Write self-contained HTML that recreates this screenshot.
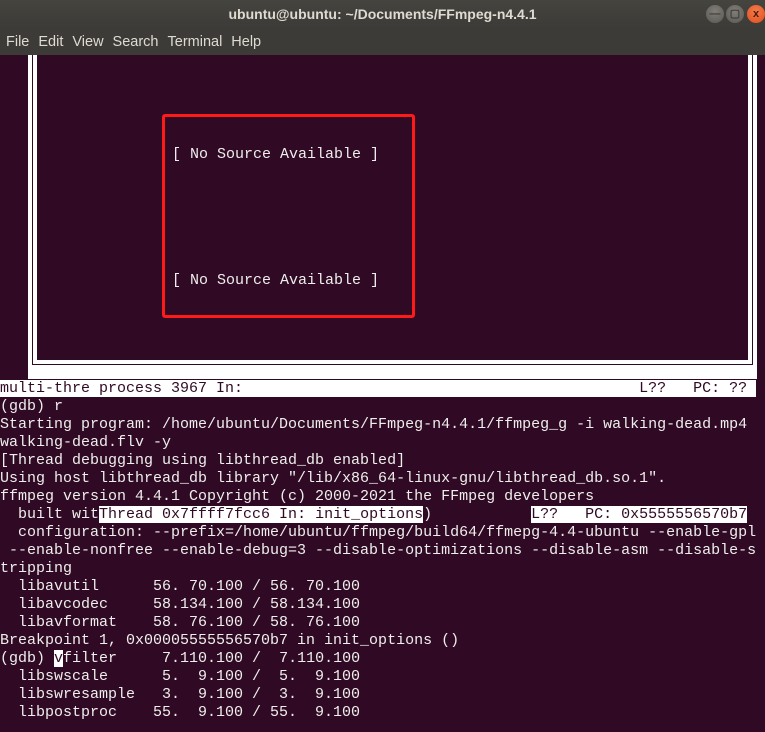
<!DOCTYPE html>
<html><head><meta charset="utf-8"><style>
*{margin:0;padding:0}
body{width:765px;height:732px;overflow:hidden;background:#300a24;position:relative;font-family:"Liberation Mono",monospace}
#title{position:absolute;left:0;top:0;width:765px;height:28px;background:linear-gradient(#45443f,#3c3b37);color:#dfdbd2;font:bold 14px "Liberation Sans",sans-serif;text-align:center;line-height:28px}
#menu{position:absolute;left:0;top:28px;width:765px;height:27px;background:#3c3b37;color:#dfdbd2;font:14.5px "Liberation Sans",sans-serif;line-height:28px}
#menu span{margin-left:6px;margin-right:3px}
.btn{position:absolute;top:5px;width:18px;height:18px;border-radius:50%;background:radial-gradient(circle at 50% 35%,#807d76,#5a5954);color:#3c3b37;font:bold 11px "Liberation Sans",sans-serif;text-align:center;line-height:18px}
.ob{position:absolute;left:28px;top:55px;width:729px;height:324px;background:#fff}
.d1{position:absolute;left:4px;top:0;width:721px;height:310px;background:#300a24}
.w1{position:absolute;left:5px;top:0;width:719px;height:309px;background:#fff}
.d2{position:absolute;left:9px;top:0;width:711px;height:305px;background:#300a24}
.red{position:absolute;left:162px;top:114px;width:247px;height:198px;border:3px solid #ff1a1a;border-radius:3px}
.t{position:absolute;color:#eeeeec;font-size:15px;line-height:18px;white-space:pre}
pre{position:absolute;left:0;top:380px;color:#eeeeec;font:15px/18px "Liberation Mono",monospace;white-space:pre}
.h{background:#fff;color:#300a24}
</style></head><body>
<div id="title">ubuntu@ubuntu: ~/Documents/FFmpeg-n4.4.1</div>
<div class="btn" style="left:706px">—</div>
<div class="btn" style="left:726px">▢</div>
<div class="btn" style="left:747px;background:radial-gradient(circle at 50% 35%,#f47a4a,#e0501f);color:#4a1a0a">x</div>
<div id="menu"><span>File</span><span>Edit</span><span>View</span><span>Search</span><span>Terminal</span><span>Help</span></div>
<div class="ob"><div class="d1"></div><div class="w1"></div><div class="d2"></div></div>
<div class="red"></div>
<div class="t" style="left:172px;top:146px">[ No Source Available ]</div>
<div class="t" style="left:172px;top:272px">[ No Source Available ]</div>
<pre><span class="h">multi-thre process 3967 In:                                            L??   PC: ?? </span>
(gdb) r
Starting program: /home/ubuntu/Documents/FFmpeg-n4.4.1/ffmpeg_g -i walking-dead.mp4
walking-dead.flv -y
[Thread debugging using libthread_db enabled]
Using host libthread_db library "/lib/x86_64-linux-gnu/libthread_db.so.1".
ffmpeg version 4.4.1 Copyright (c) 2000-2021 the FFmpeg developers
  built wit<span class="h">Thread 0x7ffff7fcc6 In: init_options</span>)           <span class="h">L??   PC: 0x5555556570b7</span>
  configuration: --prefix=/home/ubuntu/ffmpeg/build64/ffmepg-4.4-ubuntu --enable-gpl
 --enable-nonfree --enable-debug=3 --disable-optimizations --disable-asm --disable-s
tripping
  libavutil      56. 70.100 / 56. 70.100
  libavcodec     58.134.100 / 58.134.100
  libavformat    58. 76.100 / 58. 76.100
Breakpoint 1, 0x00005555556570b7 in init_options ()
(gdb) <span class="h">v</span>filter     7.110.100 /  7.110.100
  libswscale      5.  9.100 /  5.  9.100
  libswresample   3.  9.100 /  3.  9.100
  libpostproc    55.  9.100 / 55.  9.100</pre>
</body></html>
